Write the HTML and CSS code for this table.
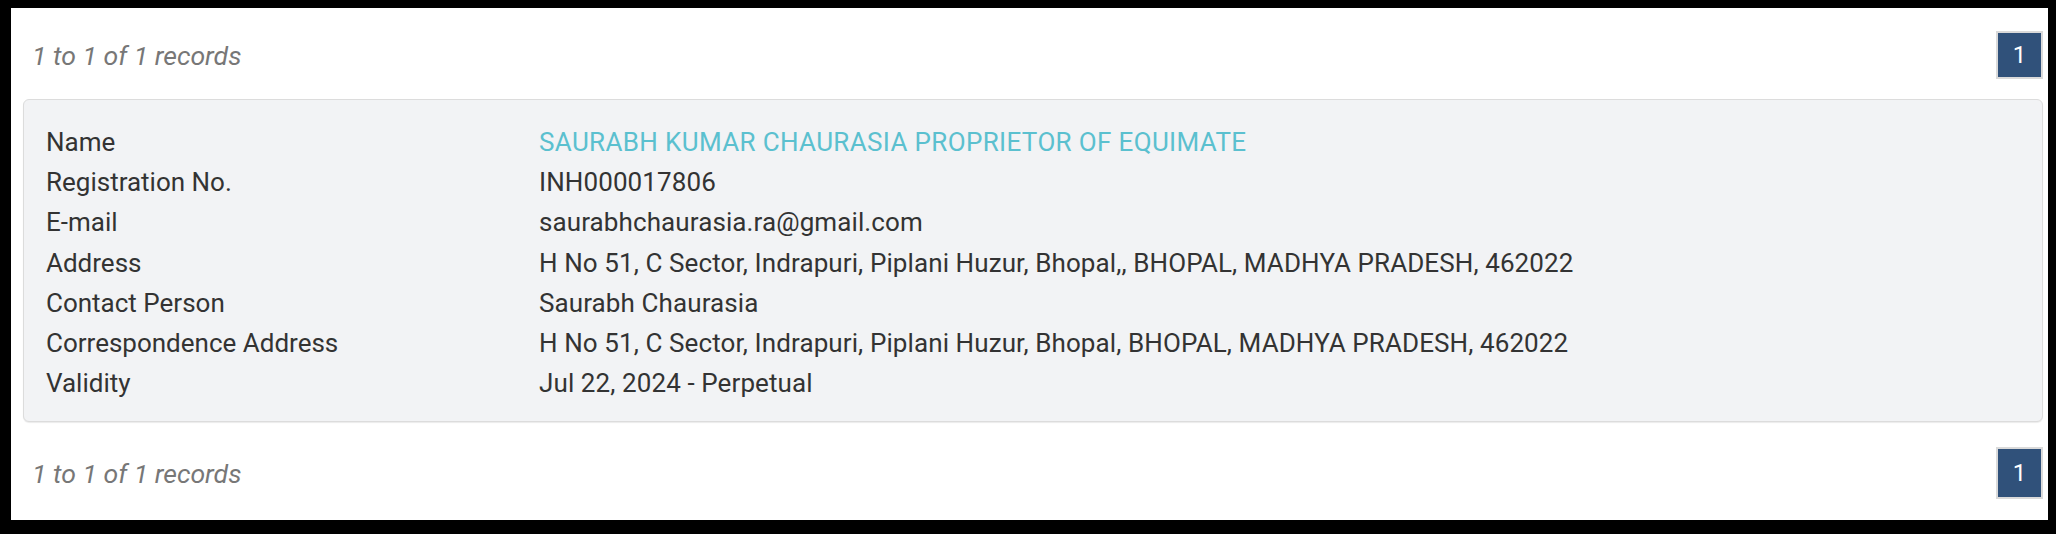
FILE: index.html
```html
<!DOCTYPE html>
<html lang="en">
<head>
<meta charset="utf-8">
<title>Records</title>
<link rel="stylesheet" href="styles.css">
</head>
<body>
<div class="frame">
  <div class="pager pager-top">
    <span class="count">1 to 1 of 1 records</span>
    <span class="page-btn">1</span>
  </div>
  <div class="card">
    <dl class="details">
      <dt>Name</dt><dd class="name">SAURABH KUMAR CHAURASIA PROPRIETOR OF EQUIMATE</dd>
      <dt>Registration No.</dt><dd>INH000017806</dd>
      <dt>E-mail</dt><dd>saurabhchaurasia.ra@gmail.com</dd>
      <dt>Address</dt><dd>H No 51, C Sector, Indrapuri, Piplani Huzur, Bhopal,, BHOPAL, MADHYA PRADESH, 462022</dd>
      <dt>Contact Person</dt><dd>Saurabh Chaurasia</dd>
      <dt>Correspondence Address</dt><dd>H No 51, C Sector, Indrapuri, Piplani Huzur, Bhopal, BHOPAL, MADHYA PRADESH, 462022</dd>
      <dt>Validity</dt><dd>Jul 22, 2024 - Perpetual</dd>
    </dl>
  </div>
  <div class="pager pager-bottom">
    <span class="count">1 to 1 of 1 records</span>
    <span class="page-btn">1</span>
  </div>
</div>
</body>
</html>
```
FILE: styles.css
```css
html, body {
  margin: 0;
  background: #000;
}
body {
  padding: 8px 8px 14px 11px;
  font-family: Roboto, "Liberation Sans", sans-serif;
  color: #333;
}
.frame {
  background: #fff;
  height: 512px;
  box-sizing: border-box;
  padding: 23px 5px 0 12px;
}
.pager {
  display: flex;
  justify-content: space-between;
  align-items: center;
  padding-left: 9px;
}
.pager-bottom {
  margin-top: 25px;
}
.count {
  font-style: italic;
  color: #777;
  font-size: 26.6px;
}
.page-btn {
  display: flex;
  align-items: center;
  justify-content: center;
  box-sizing: border-box;
  width: 47px;
  height: 48px;
  background: #30517a;
  border: 2px solid #dadada;
  color: #fff;
  font-size: 24px;
}
.pager-bottom .page-btn {
  height: 52px;
}
.card {
  margin-top: 20px;
  background: #f2f3f5;
  border: 1px solid #dcdcdc;
  border-radius: 6px;
  box-shadow: 0 1px 1px rgba(0,0,0,0.08);
  padding: 22px 16px 18px 22px;
}
.details {
  margin: 0;
  display: grid;
  grid-template-columns: 493px 1fr;
  font-size: 26px;
  line-height: 40.2px;
}
.details dt, .details dd {
  margin: 0;
}
.details dd {
  letter-spacing: 0.1px;
}
.details .name {
  color: #5bc0cf;
  letter-spacing: 0.35px;
}
```
